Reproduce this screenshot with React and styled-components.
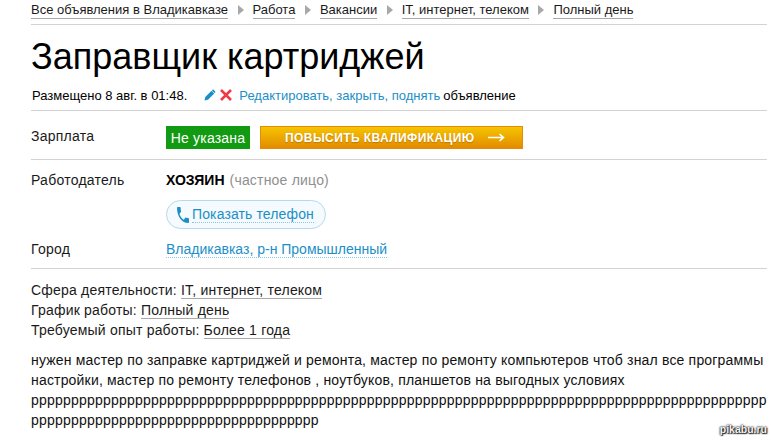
import styled, { createGlobalStyle } from 'styled-components';

const GlobalStyle = createGlobalStyle`
  html, body {
    margin: 0;
    padding: 0;
    background: #fff;
  }
  body {
    font-family: 'Liberation Sans', Arial, sans-serif;
    font-size: 14px;
    color: #000;
  }
`;

const Page = styled.div`
  position: relative;
  box-sizing: border-box;
  width: 771px;
  height: 441px;
  padding: 0 4px 0 31px;
  overflow: hidden;
`;

const Breadcrumbs = styled.nav`
  display: flex;
  align-items: center;
  height: 20px;
  padding-bottom: 4px;
  border-bottom: 1px solid #d3d3d3;
  font-size: 13px;
  line-height: 16px;
`;

const Crumb = styled.a`
  color: #1a1a1a;
  border-bottom: 1px solid #a9a9a9;
`;

const CrumbArrow = styled.span`
  width: 0;
  height: 0;
  margin: 0 9px 0 9.5px;
  border-left: 6px solid #a8a8a8;
  border-top: 5px solid transparent;
  border-bottom: 5px solid transparent;
`;

const Title = styled.h1`
  margin: 11px 0 0;
  font-size: 36px;
  line-height: 42px;
  font-weight: 400;
  color: #000;
`;

const Meta = styled.div`
  display: flex;
  align-items: center;
  height: 20px;
  margin: 7px 0 5px;
  padding-left: 1px;
  font-size: 13px;
`;

const MetaIcons = styled.span`
  display: flex;
  align-items: center;
  gap: 4px;
  margin: 0 7px 0 17px;
`;

const MetaLink = styled.a`
  color: #1c8fc7;
  margin-right: 3px;
`;

const Section = styled.section`
  border-top: 1px solid #d3d3d3;
  padding: ${(p) => p.$padding || '0'};
`;

const Row = styled.div`
  display: grid;
  grid-template-columns: 135px 1fr;
  margin-top: ${(p) => p.$top || 0}px;
  line-height: 20px;
`;

const Label = styled.div`
  color: #1a1a1a;
  letter-spacing: 0.25px;
`;

const Salary = styled.div`
  display: flex;
  gap: 10px;
`;

const Badge = styled.span`
  display: flex;
  align-items: center;
  justify-content: center;
  width: 84px;
  height: 23px;
  background: #129a12;
  color: #fff;
  letter-spacing: 0.2px;
`;

const PromoButton = styled.a`
  box-sizing: border-box;
  display: flex;
  align-items: center;
  gap: 13px;
  width: 263px;
  height: 23px;
  padding-left: 24px;
  background: linear-gradient(#f6c400, #e28c00);
  border: 1px solid #e68a0c;
  color: #fff;
  font-size: 12px;
  font-weight: 700;
  letter-spacing: 0.42px;
  text-shadow: 0 1px 1px rgba(150, 90, 0, 0.5);
`;

const Employer = styled.div`
  display: flex;
  gap: 5px;
  font-weight: 700;
`;

const Private = styled.span`
  color: #8f8f8f;
  font-weight: 400;
  letter-spacing: 0.2px;
`;

const PhoneButton = styled.a`
  box-sizing: border-box;
  display: inline-flex;
  align-items: center;
  gap: 3px;
  height: 29px;
  width: 160px;
  margin-top: 10px;
  padding-left: 10px;
  background: #f4fafd;
  border: 1px solid #b5d9ec;
  border-radius: 15px;
  color: #1c8fc7;
  letter-spacing: 0.12px;
`;

const PhoneText = styled.span`
  line-height: 15px;
  border-bottom: 1px dotted #8cc5e2;
`;

const CityLink = styled.a`
  color: #1c8fc7;
  border-bottom: 1px dotted #8cc5e2;
`;

const Details = styled.div`
  padding-top: 11px;
  line-height: 20px;
  color: #1a1a1a;
  letter-spacing: 0.2px;
`;

const DetailLine = styled.div`
  height: 20px;
`;

const DetailLink = styled.a`
  color: #1a1a1a;
  border-bottom: 1px solid #a9a9a9;
`;

const Description = styled.p`
  margin: 10px 0 0;
  line-height: 20px;
  color: #111;
  letter-spacing: 0.18px;
  overflow-wrap: anywhere;
`;

const Filler = styled.span`
  letter-spacing: 0.21px;
`;

const Watermark = styled.span`
  position: absolute;
  right: 4px;
  bottom: 5px;
  font-size: 10.5px;
  font-weight: 700;
  line-height: 14px;
  color: #f2f2f2;
  text-shadow: 0 0 2px #111, 0 0 2px #111, 1px 1px 1px #333;
`;

const crumbs = ['Все объявления в Владикавказе', 'Работа', 'Вакансии', 'IT, интернет, телеком', 'Полный день'];

const details = [
  ['Сфера деятельности:', 'IT, интернет, телеком'],
  ['График работы:', 'Полный день'],
  ['Требуемый опыт работы:', 'Более 1 года'],
];

const App = () => {
  return (
    <Page>
      <GlobalStyle />
      <Breadcrumbs>
        {crumbs.map((crumb, index) => (
          <span key={crumb} style={{ display: 'contents' }}>
            {index > 0 && <CrumbArrow />}
            <Crumb>{crumb}</Crumb>
          </span>
        ))}
      </Breadcrumbs>
      <Title>Заправщик картриджей</Title>
      <Meta>
        Размещено 8 авг. в 01:48.
        <MetaIcons>
          <svg width="12" height="12" viewBox="0 0 24 24" fill="#1c8fc7">
            <path d="M1 23l1.5-7L15 3.5l5.5 5.5L8 21.5zM16.8 1.8c.8-.8 2-.8 2.8 0l2.6 2.6c.8.8.8 2 0 2.8l-1 1-5.4-5.4z" />
          </svg>
          <svg width="12" height="12" viewBox="0 0 12 12" stroke="#ee3a45" strokeWidth="2.6">
            <path d="M1 1l10 10M11 1L1 11" />
          </svg>
        </MetaIcons>
        <MetaLink>Редактировать, закрыть, поднять</MetaLink>
        объявление
      </Meta>
      <Section $padding="15px 0 10px">
        <Row>
          <Label>Зарплата</Label>
          <Salary>
            <Badge>Не указана</Badge>
            <PromoButton>
              ПОВЫСИТЬ КВАЛИФИКАЦИЮ
              <svg width="17" height="9" viewBox="0 0 17 9" fill="none" stroke="#fff" strokeWidth="1.6">
                <path d="M0 4.5h15M11.5 1l4 3.5-4 3.5" />
              </svg>
            </PromoButton>
          </Salary>
        </Row>
      </Section>
      <Section $padding="10px 0 9px">
        <Row>
          <Label>Работодатель</Label>
          <div>
            <Employer>
              ХОЗЯИН <Private>(частное лицо)</Private>
            </Employer>
            <PhoneButton>
              <svg width="12" height="16" viewBox="3 3 18 18" preserveAspectRatio="none" fill="#1c8fc7">
                <path d="M6.62 10.79c1.44 2.83 3.76 5.14 6.59 6.59l2.2-2.2c.27-.27.67-.36 1.02-.24 1.12.37 2.33.57 3.57.57.55 0 1 .45 1 1V20c0 .55-.45 1-1 1-9.39 0-17-7.61-17-17 0-.55.45-1 1-1h3.5c.55 0 1 .45 1 1 0 1.25.2 2.45.57 3.57.11.35.03.74-.25 1.02l-2.2 2.2z" />
              </svg>
              <PhoneText>Показать телефон</PhoneText>
            </PhoneButton>
          </div>
        </Row>
        <Row $top={10}>
          <Label>Город</Label>
          <div>
            <CityLink>Владикавказ, р-н Промышленный</CityLink>
          </div>
        </Row>
      </Section>
      <Section>
        <Details>
          {details.map(([name, value]) => (
            <DetailLine key={name}>
              {name} <DetailLink>{value}</DetailLink>
            </DetailLine>
          ))}
        </Details>
        <Description>
          нужен мастер по заправке картриджей и ремонта, мастер по ремонту компьютеров чтоб знал все программы настройки, мастер по ремонту телефонов , ноутбуков, планшетов на выгодных условиях <Filler>{'p'.repeat(128)}</Filler>
        </Description>
      </Section>
      <Watermark>pikabu.ru</Watermark>
    </Page>
  );
};

export default App;
